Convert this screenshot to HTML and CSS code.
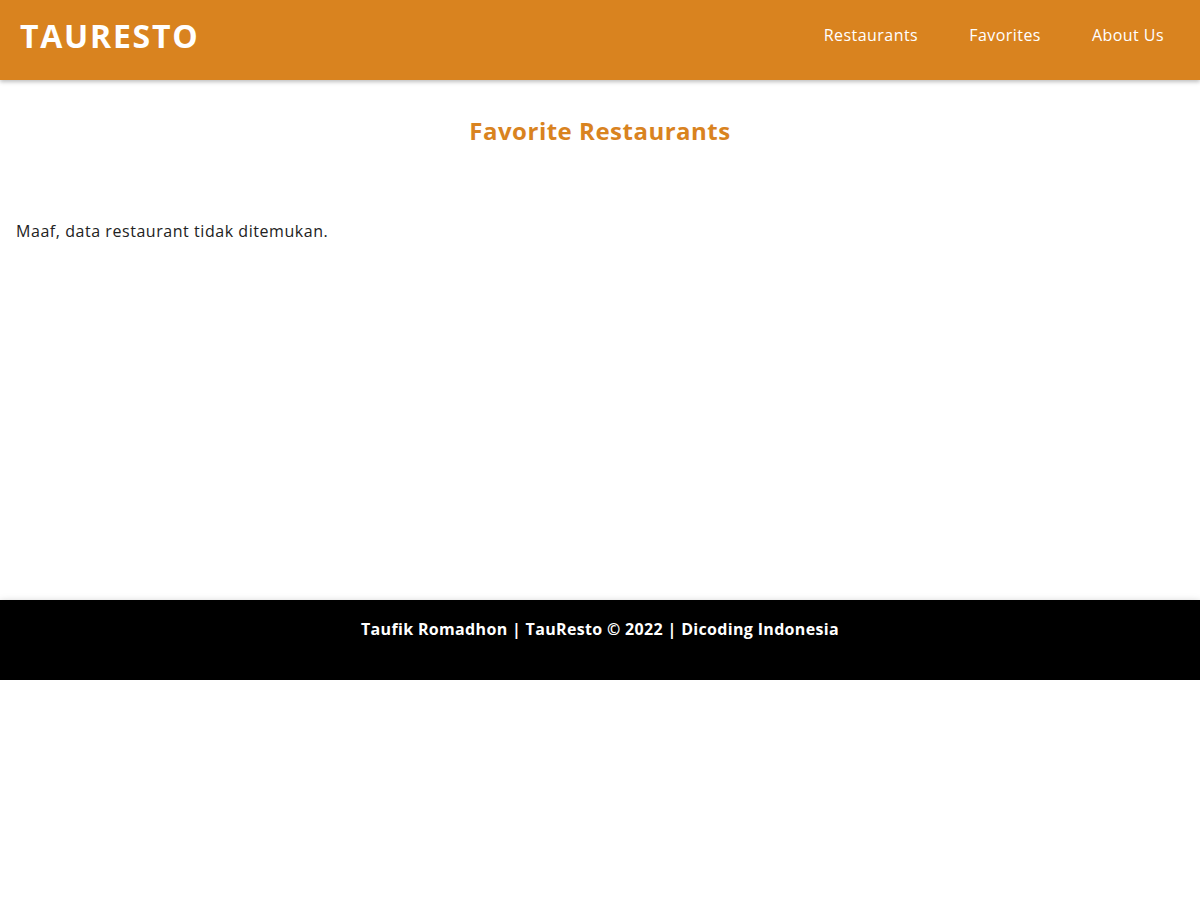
FILE: index.html
```html
<!DOCTYPE html>
<html lang="id">
<head>
<meta charset="utf-8">
<title>TauResto</title>
<link rel="stylesheet" href="styles.css">
</head>
<body>
<header class="app-bar">
  <h1 class="brand">TAURESTO</h1>
  <nav class="nav">
    <a class="nav-link" href="#">Restaurants</a>
    <a class="nav-link" href="#">Favorites</a>
    <a class="nav-link" href="#">About Us</a>
  </nav>
</header>
<main class="content">
  <h2 class="page-title">Favorite Restaurants</h2>
  <p class="empty">Maaf, data restaurant tidak ditemukan.</p>
</main>
<footer class="footer">
  <p class="footer-text">Taufik Romadhon | TauResto © 2022 | Dicoding Indonesia</p>
</footer>
</body>
</html>
```
FILE: styles.css
```css
* { box-sizing: border-box; }
body {
  margin: 0;
  font-family: "Open Sans", "DejaVu Sans", sans-serif;
  background: #fff;
  color: #222;
}
.app-bar {
  height: 80px;
  background: #d9831f;
  display: flex;
  align-items: center;
  justify-content: space-between;
  padding: 0 36px 10px 20px;
  box-shadow: 0 2px 4px rgba(0,0,0,0.25);
  position: relative;
  z-index: 1;
}
.brand {
  margin: 0;
  color: #fff;
  font-size: 32px;
  font-weight: 700;
  letter-spacing: 1.75px;
}
.nav {
  display: flex;
  gap: 51px;
}
.nav-link {
  color: #fff;
  text-decoration: none;
  font-size: 16px;
  letter-spacing: 0.45px;
}
.content {
  min-height: 520px;
  padding: 0 16px;
}
.page-title {
  margin: 0;
  padding-top: 34px;
  text-align: center;
  color: #d9831f;
  font-size: 24px;
  font-weight: 700;
  letter-spacing: 0.5px;
}
.empty {
  margin: 0;
  padding-top: 73px;
  font-size: 16px;
  letter-spacing: 0.55px;
}
.footer {
  height: 80px;
  background: #000;
  box-shadow: 0 3px 8px rgba(0,0,0,0.35);
  padding-top: 18px;
}
.footer-text {
  margin: 0;
  text-align: center;
  color: #fff;
  font-weight: 700;
  font-size: 16px;
  letter-spacing: 0.33px;
}
```
